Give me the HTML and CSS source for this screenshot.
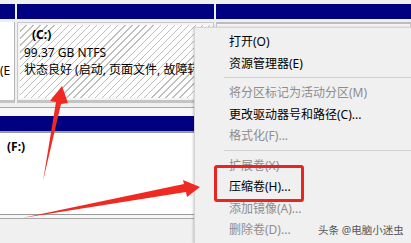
FILE: index.html
```html
<!DOCTYPE html>
<html lang="zh-CN">
  <head>
    <meta charset="UTF-8" />
    <meta name="viewport" content="width=device-width, initial-scale=1.0" />
    <title>磁盘管理</title>
    <link rel="stylesheet" href="styles.css">
  </head>
  <body>
    <!-- Disk 0 -->
    <div class="disk disk-top">
      <div class="part part-small">
        <div class="bar"></div>
        <div class="pbody plain">
          <div class="cut">(E</div>
        </div>
      </div>
      <div class="part part-c">
        <div class="bar"></div>
        <div class="pbody framed">
          <div class="hatch">
            <div class="line label">(C:)</div>
            <div class="line">99.37 GB NTFS</div>
            <div class="line">状态良好 (启动, 页面文件, 故障转储</div>
          </div>
        </div>
      </div>
      <div class="part part-rest">
        <div class="bar"></div>
        <div class="pbody framed"></div>
      </div>
    </div>

    <div class="spacer"></div>

    <!-- Disk 1 -->
    <div class="disk disk-bottom">
      <div class="bar wide"></div>
      <div class="pbody f-body">
        <div class="line label">(F:)</div>
      </div>
    </div>
    <div class="footer"></div>

    <!-- Context menu -->
    <ul class="menu">
      <li class="item">打开(O)</li>
      <li class="item">资源管理器(E)</li>
      <li class="sep"></li>
      <li class="item off">将分区标记为活动分区(M)</li>
      <li class="item">更改驱动器号和路径(C)...</li>
      <li class="item off">格式化(F)...</li>
      <li class="sep"></li>
      <li class="item off">扩展卷(X)</li>
      <li class="item">压缩卷(H)...</li>
      <li class="item off">添加镜像(A)...</li>
      <li class="item off">删除卷(D)...</li>
    </ul>

    <div class="highlight"></div>

    <svg class="arrows" width="411" height="243" viewBox="0 0 411 243">
      <polygon points="43,181 56,102 50,101 62,86 68,103 61,104" />
      <polygon points="22,218 184,184 183,180 200,187 187,197 186,192" />
    </svg>

    <div class="watermark">头条 @电脑小迷虫</div>
  </body>
</html>
```

FILE: styles.css
```css
/* General */
body {
  margin: 0;
  width: 411px;
  height: 243px;
  overflow: hidden;
  position: relative;
  background-color: #f0f0f0;
  font-family: "Segoe UI", "Noto Sans", "Noto Sans CJK SC", sans-serif;
  font-size: 12px;
  color: #000;
}

/* Disk rows */
.disk-top {
  display: grid;
  grid-template-columns: 15px 197px 1fr;
  column-gap: 2px;
  padding-top: 4px;
}

.bar {
  height: 15px;
  background-color: #000080;
}

.pbody {
  margin-top: 3px;
  height: 81px;
  box-sizing: border-box;
  background-color: #fff;
}

.plain {
  border-right: 1px solid #b5b5b5;
  border-bottom: 3px solid #c4c4c4;
  overflow: hidden;
}

.cut {
  margin-top: 40px;
  white-space: nowrap;
}

.framed {
  border: 1px solid #c8c8c8;
  border-bottom: 3px solid #c4c4c4;
  padding: 2px;
  background-color: #f4f4f4;
}

.part-rest .framed {
  border-top: 2px solid #bcbcbc;
}

/* Hatched (selected) partition */
.hatch {
  height: 100%;
  padding: 1px 0 0 4px;
  box-sizing: border-box;
  overflow: hidden;
  background-color: #fff;
  background-image: repeating-linear-gradient(
    135deg,
    #fff 0,
    #fff 4px,
    #bdbdbd 4px,
    #bdbdbd 5px
  );
}

.line {
  line-height: 17.5px;
  white-space: nowrap;
}

.label {
  font-weight: bold;
  padding-left: 8px;
}

.spacer {
  height: 4px;
  border-bottom: 1px solid #a8a8a8;
}

.disk-bottom {
  padding-top: 8px;
  background-color: #f8f8f8;
}

.f-body {
  margin-top: 0;
  height: 84px;
  border-top: 2px solid #9c9c9c;
  border-bottom: 1px solid #9a9a9a;
  padding-top: 5px;
}

.f-body .label {
  padding-left: 7px;
}

.footer {
  height: 3px;
  border-bottom: 1px solid #a8a8a8;
  background-color: #f7f7f7;
}

/* Context menu */
.menu {
  position: absolute;
  left: 194px;
  top: 27px;
  right: 0;
  bottom: 0;
  margin: 0;
  padding: 3px 0 0 0;
  list-style: none;
  overflow: hidden;
  background-color: #f0f0f0;
  border-left: 1px solid #d4d4d4;
  border-top: 1px solid #d4d4d4;
  box-shadow: -1px 0 2px rgba(0, 0, 0, 0.18);
}

.item {
  height: 21.5px;
  line-height: 21.5px;
  padding-left: 34px;
  white-space: nowrap;
}

.item.off {
  color: #8d8d8d;
}

.sep {
  height: 8px;
  margin-left: 29px;
  background: linear-gradient(#d2d2d2, #d2d2d2) no-repeat 0 3px / 100% 1px;
}

/* Annotations */
.highlight {
  position: absolute;
  left: 214px;
  top: 165px;
  width: 84px;
  height: 31px;
  border: 3px solid #e8261f;
  border-radius: 3px;
}

.arrows {
  position: absolute;
  left: 0;
  top: 0;
  pointer-events: none;
}

.arrows polygon {
  fill: #ee2a22;
}

.watermark {
  position: absolute;
  left: 318px;
  top: 222px;
  font-size: 10.5px;
  line-height: 16px;
  color: #555;
  white-space: nowrap;
}
```
